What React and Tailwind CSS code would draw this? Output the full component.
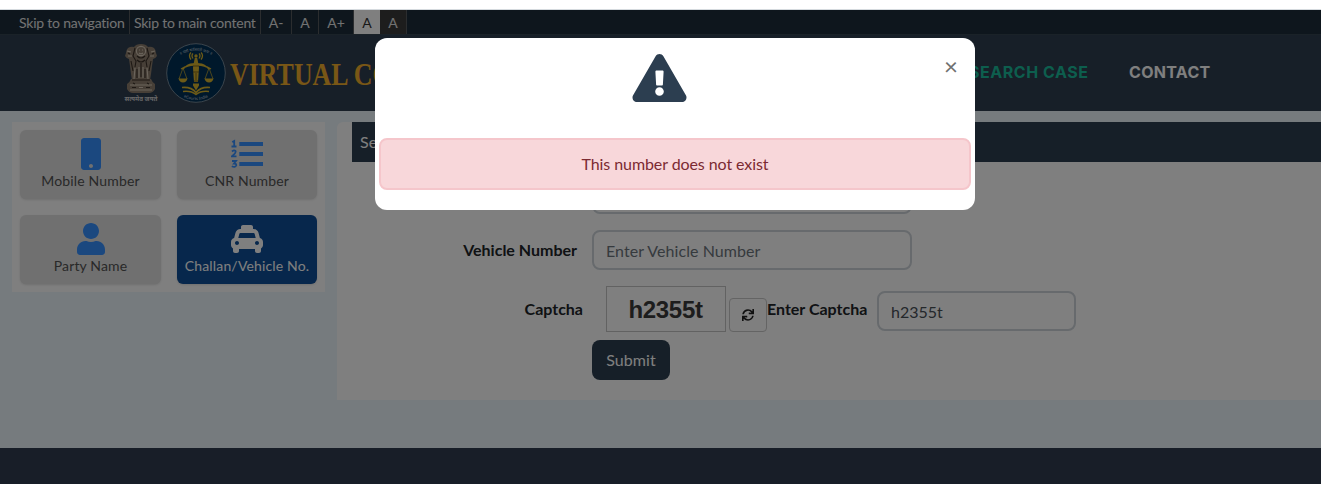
import React from "react";
import { FaMobile, FaUser, FaTaxi, FaExclamationTriangle, FaSync } from "react-icons/fa";

function NumberedList({ className }) {
  return (
    <svg className={className} viewBox="0 0 32 32" fill="currentColor">
      <path d="M8.300 4h23.700v4H8.300zM8.300 14h23.700v4H8.300zM8.300 24h23.700v4H8.300z" />
      <path d="M1.200 4l2-1v5.500M.5 8.500h5M1 13.500q2-2 3.500-.5 1 1.500-3.500 5.300h4.500M1 23h4l-2 2.500q2.500 0 2.200 2-1 2.300-4.400.8" fill="none" stroke="currentColor" strokeWidth="1.800" />
    </svg>
  );
}

function StateEmblem() {
  return (
    <svg className="h-[62px] w-9 shrink-0" viewBox="0 0 36 62">
      <g fill="#8e7f6f">
        <path d="M11 5q2-3 7-3t7 3q3-1 6 1 2 2 2 5l1 3q-2 3-4 3l-1 7-1 8-1 6H9l-1-6-1-8-1-7q-2 0-4-3l1-3q0-3 2-5 3-2 6-1z" />
        <path d="M8 37h20q1 3 4 5v5q-2 4-6 4H10q-4 0-6-4v-5q3-2 4-5z" />
      </g>
      <g fill="none" stroke="#d6c9b8" strokeWidth="1.1">
        <circle cx="18" cy="9" r="4.6" />
        <path d="M16 8h1M19 8h1M16 11q2 1.500 4 0M4 9l4 1M32 9l-4 1M5 14h4M27 14h4M12 26l-1 11M16 25v11M20 25v11M24 26l1 11M7 43h22M7 48h22M16 45.500h4" />
      </g>
      <g fill="none" stroke="#3b3028" strokeWidth="1.100">
        <path d="M12 6l-2 8 3 5-1 6M24 6l2 8-3 5 1 6M14 14q4 4 8 0M14 18q4 4 8 0M18 21v14M14 27v9M22 27v9M8 19l2 10M28 19l-2 10M9 38h18M10 41l2 1M24 41l2 1M9 45.500h4M23 45.500h4M5 11l2 1M31 11l-2 1" />
      </g>
      <text x="18" y="58.500" textAnchor="middle" textLength="33" lengthAdjust="spacingAndGlyphs" fontSize="6.500" fontWeight="700" fill="#d0d0d0" fontFamily="Noto Sans, sans-serif">सत्यमेव जयते</text>
    </svg>
  );
}

function CourtSeal() {
  return (
    <svg className="h-[60px] w-[60px] shrink-0" viewBox="0 0 60 60">
      <circle cx="30" cy="30" r="29.300" fill="#003057" stroke="#7f929f" strokeWidth=".9" />
      <defs>
        <path id="sealTop" d="M11 14Q30 2 49 14" />
        <path id="sealBottom" d="M14 52Q30 62 46 52" />
      </defs>
      <g fill="#c2ced8" fontSize="4" fontFamily="Noto Sans, sans-serif">
        <text textAnchor="middle"><textPath href="#sealTop" startOffset="50%">॥ यतो धर्मस्ततो जयः ॥</textPath></text>
        <text textAnchor="middle"><textPath href="#sealBottom" startOffset="50%">eCourts India</textPath></text>
      </g>
      <g fill="none" stroke="#d9b52e" strokeWidth="1.300">
        <path d="M28 21q-5-1-11 5M32 21q5-1 11 5M28 22q-6 0-13 4M32 22q6 0 13 4" />
        <path d="M17 25l-4 11M17 25l4 11M43 25l-4 11M43 25l4 11" strokeWidth=".7" />
        <path d="M27 10.500q-2 2 0 5M25 9.500q-3 3 0 7M33 10.500q2 2 0 5M35 9.500q3 3 0 7" />
        <path d="M16 44.500q9-1 14 5 5-6 14-5M17 48.500q8-1 13 3 5-4 13-3" strokeWidth="1.600" />
      </g>
      <g fill="#d9b52e">
        <path d="M12.500 35.500h9q-1 4-4.500 4t-4.500-4zM38.500 35.500h9q-1 4-4.500 4t-4.500-4zM27.500 20h5l.5 5-1 14h-4l-1-14zM27 40.500h6v2l-3 5-3-5z" />
        <circle cx="30" cy="13" r="1.700" />
        <path d="M28.800 15h2.400l1 5h-4.400z" />
      </g>
      <path d="M27 23h6M27 29h6M28 38h4M30 30v7" stroke="#66501d" strokeWidth=".8" />
    </svg>
  );
}

function SearchCard({ icon: Icon, label, active }) {
  return (
    <div className={active
      ? "flex h-[69px] flex-col items-center rounded-md bg-[#0f4f98] pt-2 text-white shadow"
      : "flex h-[69px] flex-col items-center rounded-md bg-[#e0e0e0] pt-2 text-[#525252] shadow"}>
      <Icon className={active ? "h-8 w-8 shrink-0" : "h-8 w-8 shrink-0 text-[#3690ff]"} />
      <span className="whitespace-nowrap text-[14px] leading-[22px] tracking-[0.15px]">{label}</span>
    </div>
  );
}

function UtilityBar() {
  return (
    <div className="flex h-[25px] border-b border-[#344451] bg-[#1c2d3b] pl-[15px] text-[14px] leading-[25px] text-[#e4e4e4]">
      <span className="w-[115px] whitespace-nowrap border-r border-[#565b5f] pl-1 tracking-[-0.21px]">Skip to navigation</span>
      <span className="w-[131px] whitespace-nowrap border-r border-[#565b5f] pl-1 tracking-[-0.24px]">Skip to main content</span>
      <span className="w-[31px] border-r border-[#565b5f] text-center">A-</span>
      <span className="w-[27px] border-r border-[#565b5f] text-center">A</span>
      <span className="w-[35px] border-r border-[#565b5f] text-center">A+</span>
      <span className="w-[26px] bg-white text-center text-[#333333]">A</span>
      <span className="w-[27px] border-r border-[#565b5f] bg-[#3b3b3b] text-center">A</span>
    </div>
  );
}

function Masthead() {
  return (
    <header className="flex h-[76px] items-center bg-[#2f3e50] pl-[123px]">
      <StateEmblem />
      <div className="ml-[7px] flex w-16 shrink-0"><CourtSeal /></div>
      <div className="w-[700px] shrink-0 whitespace-nowrap">
        <div className="origin-left translate-y-px scale-x-[0.81] font-['Liberation_Serif',serif] text-[32px] font-bold text-[#f3ae2c]">VIRTUAL COURTS</div>
      </div>
      <nav className="flex pb-[2px] pl-[39px] font-['Inter',sans-serif] text-[16px] font-bold leading-6">
        <span className="w-[160px] whitespace-nowrap tracking-[0.55px] text-[#1abc9c]">SEARCH CASE</span>
        <span className="tracking-[0.3px] text-white">CONTACT</span>
      </nav>
    </header>
  );
}

function SearchForm() {
  return (
    <section className="mt-[11px] h-[278px] flex-1 rounded-tl-md bg-white pl-[15px]">
      <div className="h-10 bg-[#2c3e50] pl-2 text-[16px] leading-10 text-white">Search by Challan/Vehicle No.</div>
      <div className="flex h-[52px] items-end pl-[240px]">
        <div className="h-10 w-80 rounded-lg border-2 border-[#ced4da]" />
      </div>
      <div className="mt-4 flex h-10">
        <label className="mr-[15px] w-[225px] whitespace-nowrap text-right text-[16px] font-bold leading-10 text-[#212529]">Vehicle Number</label>
        <div className="h-10 w-80 rounded-lg border-2 border-[#ced4da] px-3 text-[16px] leading-[38px] tracking-[0.06px] text-[#6c757d]">Enter Vehicle Number</div>
      </div>
      <div className="mt-4 flex h-[46px]">
        <label className="mr-[23px] w-[231px] text-right text-[16px] font-bold leading-[46px] text-[#212529]">Captcha</label>
        <div className="h-[46px] w-[120px] border border-[#c5c5c5] pr-px text-center font-['Liberation_Sans',sans-serif] text-[24px] font-bold leading-[45px] tracking-[-0.3px] text-[#3a3a3a]">h2355t</div>
        <div className="ml-[3px] mt-3 flex h-[34px] w-[38px] items-center justify-center rounded border border-[#c8c8c8] text-[#222222]"><FaSync className="h-3 w-3" /></div>
        <label className="w-[110px] whitespace-nowrap text-[16px] font-bold leading-[46px] text-[#212529]">Enter Captcha</label>
        <div className="mt-[5px] h-10 w-[199px] rounded-lg border-2 border-[#ced4da] px-3 text-[16px] leading-[38px] text-[#495057]">h2355t</div>
      </div>
      <div className="mt-2 pl-[240px]">
        <div className="h-10 w-[78px] rounded-lg bg-[#2c3e50] text-center text-[16px] leading-10 tracking-[0.08px] text-white">Submit</div>
      </div>
    </section>
  );
}

function AlertDialog() {
  return (
    <div role="dialog" className="absolute left-[375px] top-[38px] h-[172px] w-[600px] rounded-[12px] bg-white px-1 pt-4">
      <FaExclamationTriangle className="ml-[253px] h-12 w-[55px] text-[#2c3e50]" />
      <button className="absolute right-[17px] top-[14px] text-[24px] leading-7 text-[#707070]">×</button>
      <div className="mt-9 h-[52px] rounded-lg border-2 border-[#f5c6cb] bg-[#f8d7da] text-center text-[16px] leading-[48px] tracking-[-0.08px] text-[#7c2a32]">This number does not exist</div>
    </div>
  );
}

export default function App() {
  return (
    <main className="relative h-[484px] w-[1321px] overflow-hidden bg-white pt-[10px] font-['Lato',sans-serif]">
      <UtilityBar />
      <Masthead />
      <div className="flex h-[337px] bg-[#edf6fc]">
        <aside className="ml-3 mr-3 mt-[11px] grid h-[170px] w-[313px] grid-cols-[141px_140px] content-start gap-4 bg-white p-2">
          <SearchCard icon={FaMobile} label="Mobile Number" />
          <SearchCard icon={NumberedList} label="CNR Number" />
          <SearchCard icon={FaUser} label="Party Name" />
          <SearchCard icon={FaTaxi} label="Challan/Vehicle No." active />
        </aside>
        <SearchForm />
      </div>
      <footer className="h-[37px] border-b border-[#1f2734] bg-[#303c50]" />
      <div className="absolute inset-x-0 bottom-0 top-[10px] bg-black/50" />
      <div className="absolute inset-x-0 top-[9px] h-px bg-[#d5dade]" />
      <AlertDialog />
    </main>
  );
}
